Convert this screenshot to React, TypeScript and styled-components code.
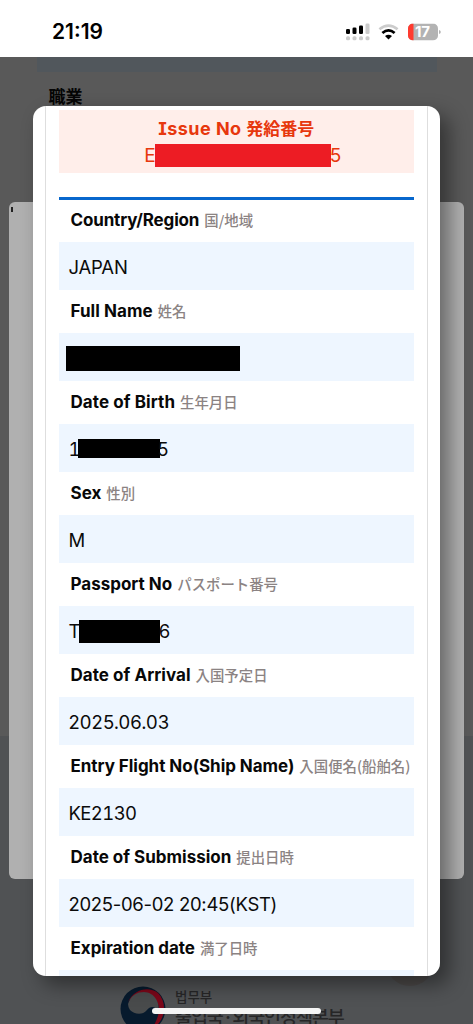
import React from "react";
import styled, { createGlobalStyle } from "styled-components";

const Global = createGlobalStyle`
  *{box-sizing:border-box}
  body{margin:0;overflow:hidden;background:#595959;font-family:Inter,"Noto Sans CJK JP",sans-serif;color:#0b0b0b}
`;
const Screen = styled.div`position:relative;width:473px;height:1024px;overflow:hidden;display:flex;flex-direction:column;background:linear-gradient(#595959 736.5px,#505254 736.5px);`;
const StatusBar = styled.header`height:57px;flex:none;background:#fff;display:flex;justify-content:space-between;align-items:center;padding:6px 32px 0 52px;`;
const Clock = styled.span`font-size:21px;font-weight:600;letter-spacing:0;line-height:24px;color:#000;`;
const StatusIcons = styled.svg`display:block;width:98px;height:20px;margin-top:-2px;`;
const Page = styled.main`flex:1;display:flex;flex-direction:column;`;
const FieldStrip = styled.div`height:15px;margin:0 36.5px 0 37px;background:#51575c;`;
const PageHeading = styled.div`height:130px;padding:12px 0 0 48.5px;font-family:"Noto Sans CJK JP",sans-serif;font-weight:700;font-size:17px;line-height:24px;color:#050505;`;
const Backdrop = styled.div`height:677px;margin:0 9px;border-radius:6px;background:#b0b0b0;padding:5px 2px;`;
const Tick = styled.div`width:2px;height:5px;background:#222;`;
const Footer = styled.footer`flex:1;display:flex;padding:107px 0 0 120px;gap:9px;font-family:"Noto Sans CJK KR",sans-serif;color:#262627;`;
const Emblem = styled.svg`width:46px;height:46px;flex:none;`;
const Agency = styled.div`display:flex;flex-direction:column;white-space:nowrap;`;
const Ministry = styled.span`font-size:13.5px;line-height:20px;font-weight:500;`;
const Bureau = styled.span`font-size:18.5px;line-height:20px;font-weight:500;letter-spacing:-1.1px;`;
const ScrollButton = styled.div`position:absolute;left:386px;top:938px;width:48px;height:48px;border-radius:50%;background:#4d4a49;`;
const Dialog = styled.section`position:absolute;left:33px;top:105.5px;width:407px;height:870px;border-radius:13px;background:#fff;overflow:hidden;padding:0 12px;`;
const Shadow = styled.div`position:absolute;left:33px;top:105.5px;width:407px;height:870px;border-radius:13px;box-shadow:9px 9px 20px rgba(0,0,0,.42);`;
const Frame = styled.div`border:solid #dedede;border-width:0 1.5px;height:100%;padding:4px 13px 0 12.5px;display:flex;flex-direction:column;`;
const Issue = styled.div`height:63px;flex:none;background:#ffeeea;color:#e7370d;display:flex;flex-direction:column;align-items:center;padding-top:5px;`;
const IssueTitle = styled.div`font-size:18px;line-height:26px;font-weight:700;letter-spacing:.46px;white-space:nowrap;font-feature-settings:"cv08";`;
const IssueLocal = styled.span`font-family:"Noto Sans CJK JP",sans-serif;font-size:17px;letter-spacing:0;`;
const IssueValue = styled.div`font-size:19px;line-height:27px;display:flex;align-items:center;margin-left:12px;letter-spacing:-.9px;`;
const Mask = styled.span<{ $w: number; $h: number; $red?: boolean; $drop?: number; $overlap?: number }>`display:block;width:${p => p.$w}px;height:${p => p.$h}px;margin:${p => p.$drop ?? 0}px ${p => -(p.$overlap ?? 0)}px 0 0;background:${p => p.$red ? "#ed1c24" : "#000"};flex:none;`;
const List = styled.div`margin-top:24.5px;border-top:3px solid #0767cd;flex:none;`;
const Label = styled.div`height:43px;display:flex;align-items:center;gap:5px;padding:0 0 1px 12px;white-space:nowrap;&:first-child{margin-top:-1px;}`;
const English = styled.span<{ $ls: number }>`font-size:17px;font-weight:700;letter-spacing:${p => p.$ls}px;color:#080808;`;
const Local = styled.span`font-family:"Noto Sans CJK JP",sans-serif;font-size:14.4px;font-weight:500;line-height:20px;color:#8b8383;`;
const Value = styled.div<{ $inset: number; $ls: number; $tabular?: boolean }>`height:48px;background:#eef6ff;display:flex;align-items:center;padding:1px 0 0 ${p => p.$inset}px;font-size:18.5px;letter-spacing:${p => p.$ls}px;white-space:nowrap;font-variant-numeric:${p => p.$tabular ? "tabular-nums" : "normal"};`;
const HomeBar = styled.div`position:absolute;left:152px;top:1008px;width:169px;height:6px;border-radius:3px;background:#f5f5f5;`;

type Field = { en: string; jp: string; value: React.ReactNode; ls?: number; inset?: number; valueLs?: number; tabular?: boolean };
const fields: Field[] = [
  { en: "Country/Region", jp: "国/地域", value: "JAPAN", ls: -0.15, valueLs: -0.2 },
  { en: "Full Name", jp: "姓名", value: <Mask $w={174} $h={25} $drop={1} />, inset: 7.5, ls: 0.05 },
  { en: "Date of Birth", jp: "生年月日", value: <>1<Mask $w={81.5} $h={19} $overlap={2.5} />5</>, ls: 0.08, valueLs: -2.4, tabular: true },
  { en: "Sex", jp: "性別", value: "M" },
  { en: "Passport No", jp: "パスポート番号", value: <>T<Mask $w={81} $h={23} $drop={2} $overlap={1} />6</>, valueLs: -1.6 },
  { en: "Date of Arrival", jp: "入国予定日", value: "2025.06.03", ls: 0.04, valueLs: 0.05 },
  { en: "Entry Flight No(Ship Name)", jp: "入国便名(船舶名)", value: "KE2130", ls: -0.04, valueLs: -0.6, tabular: true },
  { en: "Date of Submission", jp: "提出日時", value: "2025-06-02 20:45(KST)", ls: 0, valueLs: -0.3 },
  { en: "Expiration date", jp: "満了日時", value: "", ls: -0.02 },
];

export default function App() {
  return (
    <>
      <Global />
      <Screen>
        <StatusBar>
          <Clock>21:19</Clock>
          <StatusIcons viewBox="0 0 98 20">
            <g fill="#000"><rect x="3" y="8" width="4" height="5" rx="1.3" /><rect x="9.5" y="6.5" width="4" height="6.5" rx="1.3" /><rect x="16" y="4.5" width="4" height="8.5" rx="1.3" /></g>
            <g fill="#ccc"><rect x="22.5" y="2.5" width="4" height="10.5" rx="1.3" />{[3, 9.5, 16, 22.5].map(x => <rect key={x} x={x} y="15.3" width="4" height="4" rx="1.5" />)}</g>
            <path d="M36.4 8.2Q45.5 1.2 54.6 8.2" fill="none" stroke="#ccc" strokeWidth="2.7" />
            <path d="M39.4 12Q45.5 6.8 51.6 12" fill="none" stroke="#000" strokeWidth="2.8" />
            <path d="M42 15Q45.5 12.4 49 15L45.5 18.5Z" />
            <clipPath id="cell"><rect x="65" y="2.5" width="30" height="17" rx="5" /></clipPath>
            <g clipPath="url(#cell)"><rect x="65" y="2.5" width="30" height="17" fill="#b3b3b3" /><rect x="65" y="2.5" width="5.5" height="17" fill="#ff3b30" /></g>
            <path d="M96 9Q97.8 9.5 97.8 11T96 13Z" fill="#b3b3b3" />
            <text x="79.5" y="16.3" textAnchor="middle" fill="#fff" fontFamily="Inter" fontWeight="700" fontSize="15">17</text>
          </StatusIcons>
        </StatusBar>
        <Page>
          <FieldStrip />
          <PageHeading>職業</PageHeading>
          <Backdrop><Tick /></Backdrop>
          <Footer>
            <Emblem viewBox="0 0 46 46">
              <circle cx="23" cy="23" r="22.5" fill="#071a2d" />
              <path d="M8 16C14 3 29 0 38 7C46 15 46 29 38 38L33 41C40 29 40 21 37 16C32 5 17 3 8 16Z" fill="#7b0719" />
              <path d="M8 18C11 9 17 6 24 6C34 6 41 17 38 27C36 19 30 20 27 24C22 30 14 28 10 24Q8 21 8 18Z" fill="#494b4c" />
            </Emblem>
            <Agency><Ministry>법무부</Ministry><Bureau>출입국·외국인정책본부</Bureau></Agency>
          </Footer>
        </Page>
        <ScrollButton />
        <Shadow />
        <Dialog>
          <Frame>
            <Issue>
              <IssueTitle>Issue No <IssueLocal>発給番号</IssueLocal></IssueTitle>
              <IssueValue>E<Mask $w={176} $h={23} $red $overlap={1} />5</IssueValue>
            </Issue>
            <List>
              {fields.map(f => (
                <React.Fragment key={f.en}>
                  <Label><English $ls={f.ls ?? 0}>{f.en}</English><Local>{f.jp}</Local></Label>
                  <Value $inset={f.inset ?? 10} $ls={f.valueLs ?? 0} $tabular={f.tabular}>{f.value}</Value>
                </React.Fragment>
              ))}
            </List>
          </Frame>
        </Dialog>
        <HomeBar />
      </Screen>
    </>
  );
}
